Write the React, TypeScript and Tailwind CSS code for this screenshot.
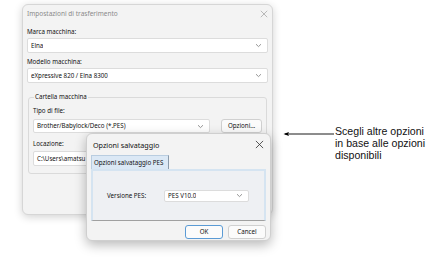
import React from "react";

function Chevron() {
  return (
    <svg width="7" height="5" viewBox="0 0 7 5" className="shrink-0">
      <path d="M1 1.2 L3.5 3.6 L6 1.2" fill="none" stroke="#8a8a8a" strokeWidth="0.9" />
    </svg>
  );
}

function Select({ value, className }: { value: string; className: string }) {
  return (
    <div
      className={`flex items-center justify-between bg-white border border-[#dcdcdc] rounded-[2px] pl-[3px] pr-[5px] text-[#111] ${className}`}
    >
      <span className="truncate">{value}</span>
      <Chevron />
    </div>
  );
}

function CloseIcon({ size, color }: { size: number; color: string }) {
  return (
    <svg width={size} height={size} viewBox="0 0 10 10">
      <path d="M1 1 L9 9 M9 1 L1 9" stroke={color} strokeWidth="0.9" fill="none" />
    </svg>
  );
}

export default function App() {
  return (
    <div
      className="relative w-[435px] h-[260px] bg-white overflow-hidden text-[6.2px] leading-[8px]"
      style={{ fontFamily: '"Noto Sans", "Open Sans", sans-serif' }}
    >
      <div className="flex">
        {/* main dialog */}
        <div className="ml-[22px] mt-[4px] w-[251px] h-[211px] bg-[#f3f3f3] border border-[#d6d6d6] rounded-[6px] shadow-[0_2px_8px_rgba(0,0,0,0.18)] flex flex-col">
          <div className="h-[18px] flex items-center justify-between pl-[4px] pr-[4px] text-[#8a8a8a] text-[6.5px]">
            <span>Impostazioni di trasferimento</span>
            <CloseIcon size={8} color="#a0a0a0" />
          </div>
          <div className="px-[4px] flex flex-col">
            <div className="h-[15px] pt-[5px] text-[#111]">Marca macchina:</div>
            <Select value="Elna" className="h-[15px]" />
            <div className="h-[15px] pt-[5px] text-[#111]">Modello macchina:</div>
            <Select value="eXpressive 820 / Elna 8300" className="h-[15px]" />

            {/* group box */}
            <div className="relative mt-[14px] mx-[1px] h-[77px] border border-[#dadada] rounded-[3px] px-[4px] pt-[9px]">
              <span className="absolute left-[5px] top-[-5px] bg-[#f3f3f3] px-[1px] text-[#111]">
                Cartella macchina
              </span>
              <div className="h-[12px] text-[#111]">Tipo di file:</div>
              <div className="flex items-center">
                <Select value="Brother/Babylock/Deco (*.PES)" className="w-[178px] h-[14px]" />
                <div className="ml-[11px] w-[41px] h-[14px] bg-[#fbfbfb] border border-[#d0d0d0] rounded-[3px] flex items-center justify-center text-[#111]">
                  Opzioni...
                </div>
              </div>
              <div className="h-[18px] pt-[7px] text-[#111]">Locazione:</div>
              <div className="w-[229px] h-[15px] flex items-center bg-white border border-[#dcdcdc] rounded-[2px] pl-[3px] text-[#111]">
                <span className="whitespace-nowrap">C:\Users\amatsu</span>
              </div>
            </div>
          </div>
        </div>

        {/* annotation */}
        <div className="ml-[10px] mt-[125px] flex items-start">
          <svg width="52" height="8" viewBox="0 0 52 8" className="mt-[5px]">
            <path d="M2 4 L51 4" stroke="#000" strokeWidth="0.9" />
            <path d="M0.5 4 L6 2 L5 4 L6 6 Z" fill="#000" />
          </svg>
          <div
            className="text-[10.6px] leading-[12px] text-[#111]"
            style={{ fontFamily: '"Liberation Sans", Arial, sans-serif' }}
          >
            Scegli altre opzioni
            <br />
            in base alle opzioni
            <br />
            disponibili
          </div>
        </div>
      </div>

      {/* overlay dialog */}
      <div className="absolute left-[86px] top-[133px] w-[185px] h-[108px] bg-[#f3f3f3] border border-[#cfcfcf] rounded-[6px] shadow-[0_4px_12px_rgba(0,0,0,0.28)] flex flex-col">
        <div className="h-[21px] flex items-center justify-between pl-[6px] pr-[6px] text-[#111] text-[7.2px]">
          <span>Opzioni salvataggio</span>
          <CloseIcon size={9} color="#333" />
        </div>
        <div className="px-[4px]">
          <div className="flex">
            <div className="h-[14px] pl-[2px] pr-[5px] bg-[#dbe8f5] border border-[#b9cde0] border-b-0 border-r-[#8a9aaa] flex items-center text-[#111]">
              Opzioni salvataggio PES
            </div>
          </div>
          <div className="h-[52px] bg-[#eef0f3] border-2 border-[#d5e4f1] border-b-[#a0a0a0] border-b flex items-center pl-[14px]">
            <span className="w-[57px] text-[#111]">Versione PES:</span>
            <Select value="PES V10.0" className="w-[85px] h-[12px]" />
          </div>
        </div>
        <div className="flex justify-end gap-[5px] pr-[4px] pt-[4px]">
          <div className="w-[38px] h-[14px] bg-[#fbfbfb] border border-[#5b9bd5] rounded-[3px] flex items-center justify-center text-[#111]">
            OK
          </div>
          <div className="w-[38px] h-[14px] bg-[#fbfbfb] border border-[#d0d0d0] rounded-[3px] flex items-center justify-center text-[#111]">
            Cancel
          </div>
        </div>
      </div>
    </div>
  );
}
